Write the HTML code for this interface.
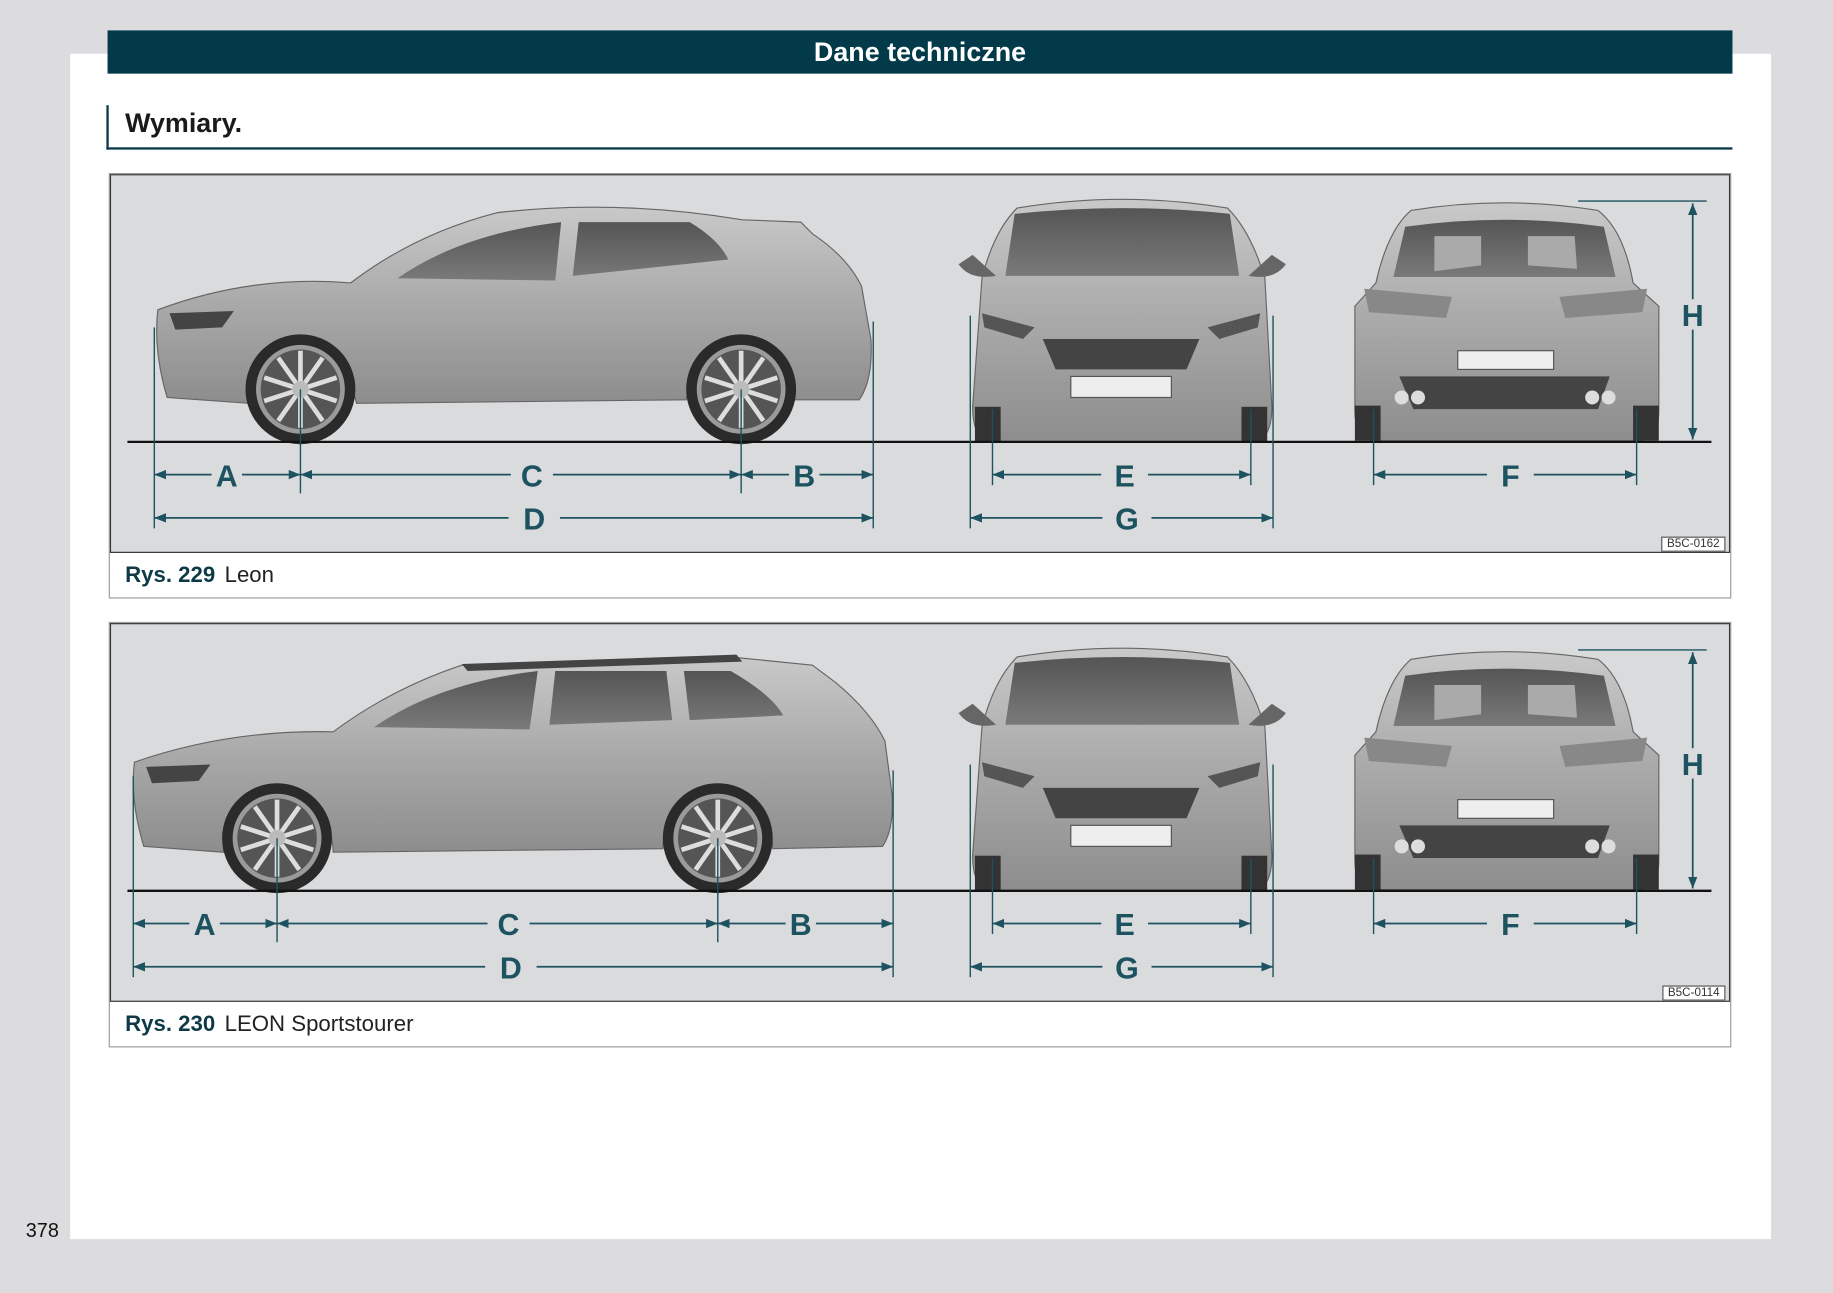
<!DOCTYPE html>
<html><head><meta charset="utf-8"><style>
html,body{margin:0;padding:0;width:1833px;height:1293px;overflow:hidden;background:#dcdcde;}
#w{position:absolute;left:0;top:0;width:1568px;height:1106px;transform:scale(1.16901);transform-origin:0 0;font-family:"Liberation Sans","DejaVu Sans",sans-serif;}
.page{position:absolute;left:60px;top:46px;width:1455px;height:1014px;background:#fff;}
.hdr{position:absolute;left:92px;top:26px;width:1390px;height:37px;background:#023a4a;color:#fff;font-weight:bold;font-size:23px;text-align:center;line-height:37px;}
.h2{position:absolute;left:91px;top:90px;width:1389px;height:36px;border-left:2px solid #0e3a48;border-bottom:2px solid #0e3a48;}
.h2 span{position:absolute;left:14px;top:2px;font-size:23px;font-weight:bold;color:#1a1a1a;}
.fig{position:absolute;left:93px;width:1386px;height:362px;border:1px solid #9a9a9a;background:#fff;}
.img{position:absolute;left:0;top:0;width:1386px;height:324px;background:#dadbdd;border:1px solid #333;box-sizing:border-box;}
.cap{position:absolute;left:13px;top:333px;font-size:19px;color:#222;}
.cap b{color:#0e3a48;font-weight:bold;margin-right:8px;}
.code{position:absolute;right:3px;bottom:0;font-size:10px;background:#fff;border:1px solid #555;padding:0 4px;color:#333;}
.pn{position:absolute;left:22px;top:1043px;font-size:17px;color:#111;}
</style></head><body><div id="w">
<div class="page"></div>
<div class="hdr">Dane techniczne</div>
<div class="h2"><span>Wymiary.</span></div>

<svg width="0" height="0" style="position:absolute">
<defs>
<linearGradient id="bg1" x1="0" y1="0" x2="0" y2="1"><stop offset="0" stop-color="#c9c9c9"/><stop offset="0.5" stop-color="#a9a9a9"/><stop offset="1" stop-color="#8d8d8d"/></linearGradient>
<linearGradient id="gl" x1="0" y1="0" x2="0" y2="1"><stop offset="0" stop-color="#555"/><stop offset="1" stop-color="#7a7a7a"/></linearGradient>
<marker id="ar" markerWidth="10" markerHeight="8" refX="10" refY="4" orient="auto-start-reverse" markerUnits="userSpaceOnUse"><path d="M0,0 L10,4 L0,8z" fill="#1d5260"/></marker>
<g id="wheel"><circle r="47" fill="#2a2a2a"/><circle r="38" fill="#9a9a9a"/><circle r="34" fill="#555"/>
<g stroke="#ddd" stroke-width="4"><line x1="0" y1="-33" x2="0" y2="33"/><line x1="-31" y1="-10" x2="31" y2="10"/><line x1="-31" y1="10" x2="31" y2="-10"/><line x1="-19" y1="-27" x2="19" y2="27"/><line x1="19" y1="-27" x2="-19" y2="27"/></g><circle r="7" fill="#bbb"/></g>
<g id="front"><path d="M10,70 Q20,30 40,10 Q130,-5 220,10 Q240,30 252,70 L258,180 Q258,205 245,210 L15,210 Q2,205 2,180 Z" fill="url(#bg1)" stroke="#666"/>
<path d="M38,15 Q130,5 222,15 L230,68 L30,68 Z" fill="url(#gl)"/>
<path d="M2,50 L-10,58 Q0,72 22,68Z M258,50 L270,58 Q260,72 238,68Z" fill="#666"/>
<path d="M62,122 L196,122 L185,148 L73,148Z" fill="#444"/><rect x="86" y="154" width="86" height="18" fill="#eee" stroke="#555"/>
<path d="M10,100 L55,112 L45,122 L12,112Z M248,100 L203,112 L213,122 L246,112Z" fill="#555"/>
<rect x="4" y="180" width="22" height="30" fill="#333"/><rect x="232" y="180" width="22" height="30" fill="#333"/></g>
<g id="rear"><path d="M20,70 Q30,25 50,8 Q130,-5 210,8 Q232,25 240,70 L262,90 L262,180 Q262,200 248,205 L16,205 Q2,200 2,180 L2,90 Z" fill="url(#bg1)" stroke="#666"/>
<path d="M45,22 Q130,10 215,22 L225,65 L35,65 Z" fill="url(#gl)"/>
<path d="M70,30 L110,30 L110,55 L70,60Z M150,30 L190,30 L192,58 L150,55Z" fill="#aaa"/>
<path d="M10,75 L85,82 L80,100 L14,95Z M252,75 L177,82 L182,100 L248,95Z" fill="#888"/>
<rect x="90" y="128" width="82" height="16" fill="#eee" stroke="#555"/>
<path d="M40,150 L220,150 L210,178 L52,178Z" fill="#444"/>
<circle cx="42" cy="168" r="6" fill="#ddd"/><circle cx="56" cy="168" r="6" fill="#ddd"/><circle cx="205" cy="168" r="6" fill="#ddd"/><circle cx="219" cy="168" r="6" fill="#ddd"/>
<rect x="2" y="175" width="22" height="30" fill="#333"/><rect x="240" y="175" width="22" height="30" fill="#333"/></g>
</defs></svg>

<div class="fig" style="top:148px">
<div class="img">
<svg width="1386" height="324" style="position:absolute;left:0;top:0" font-family="Liberation Sans,sans-serif" font-weight="bold" font-size="26" fill="#1d5260">
<path d="M40,115 Q120,85 205,92 Q260,50 330,32 Q430,20 540,38 L590,40 L600,50 Q630,70 642,95 L650,140 Q652,175 640,192 L585,192 A47,47 0 0 0 492,192 L210,195 A47,47 0 0 0 118,195 L48,190 Q36,150 40,115Z" fill="url(#bg1)" stroke="#666"/>
<path d="M245,88 Q300,50 385,40 L380,90 Z M400,40 L495,40 Q520,55 528,72 L395,86Z" fill="url(#gl)"/>
<path d="M50,118 L105,116 L95,130 L55,132Z" fill="#444"/>
<use href="#wheel" x="162" y="183"/><use href="#wheel" x="539" y="183"/>
<use href="#front" x="735" y="18"/><use href="#rear" x="1062" y="22"/>
<line x1="14" y1="228" x2="1369" y2="228" stroke="#111" stroke-width="2"/>
<g stroke="#1d5260" stroke-width="1.2">
<line x1="37" y1="130" x2="37" y2="302"/><line x1="162" y1="183" x2="162" y2="272"/><line x1="539" y1="183" x2="539" y2="272"/><line x1="652" y1="125" x2="652" y2="302"/>
<line x1="735" y1="120" x2="735" y2="302"/><line x1="754" y1="200" x2="754" y2="265"/><line x1="975" y1="200" x2="975" y2="265"/><line x1="994" y1="120" x2="994" y2="302"/>
<line x1="1080" y1="200" x2="1080" y2="265"/><line x1="1305" y1="200" x2="1305" y2="265"/><line x1="1255" y1="22" x2="1365" y2="22"/>
</g>
<g stroke="#1d5260" stroke-width="1.5" marker-start="url(#ar)" marker-end="url(#ar)">
<line x1="37" y1="256" x2="162" y2="256"/><line x1="162" y1="256" x2="539" y2="256"/><line x1="539" y1="256" x2="652" y2="256"/>
<line x1="37" y1="293" x2="652" y2="293"/><line x1="754" y1="256" x2="975" y2="256"/><line x1="735" y1="293" x2="994" y2="293"/>
<line x1="1080" y1="256" x2="1305" y2="256"/><line x1="1353" y1="24" x2="1353" y2="226"/>
</g>
<g text-anchor="middle"><rect x="86" y="243" width="26" height="26" fill="#dadbdd"/><text x="99" y="266">A</text>
<rect x="342" y="243" width="36" height="26" fill="#dadbdd"/><text x="360" y="266">C</text>
<rect x="580" y="243" width="26" height="26" fill="#dadbdd"/><text x="593" y="266">B</text>
<rect x="340" y="280" width="44" height="26" fill="#dadbdd"/><text x="362" y="303">D</text>
<rect x="847" y="243" width="40" height="26" fill="#dadbdd"/><text x="867" y="266">E</text>
<rect x="848" y="280" width="42" height="26" fill="#dadbdd"/><text x="869" y="303">G</text>
<rect x="1177" y="243" width="40" height="26" fill="#dadbdd"/><text x="1197" y="266">F</text>
<rect x="1340" y="106" width="26" height="26" fill="#dadbdd"/><text x="1353" y="129">H</text></g>
</svg>
<div class="code">B5C-0162</div>
</div>
<div class="cap"><b>Rys. 229</b>Leon</div>
</div>

<div class="fig" style="top:532px">
<div class="img">
<svg width="1386" height="324" style="position:absolute;left:0;top:0" font-family="Liberation Sans,sans-serif" font-weight="bold" font-size="26" fill="#1d5260">
<path d="M20,118 Q100,90 190,92 Q240,55 300,35 L530,28 L600,35 L620,50 Q650,75 662,100 L668,145 Q670,175 660,190 L566,192 A47,47 0 0 0 472,192 L190,195 A47,47 0 0 0 96,195 L28,190 Q16,150 20,118Z" fill="url(#bg1)" stroke="#666"/>
<path d="M300,34 L535,26 L540,32 L305,40Z" fill="#444"/>
<path d="M225,88 Q280,50 365,40 L358,90 Z M380,40 L475,40 L480,82 L375,86Z M490,40 L530,40 Q565,60 575,78 L495,82Z" fill="url(#gl)"/>
<path d="M30,122 L85,120 L75,134 L35,136Z" fill="#444"/>
<use href="#wheel" x="142" y="183"/><use href="#wheel" x="519" y="183"/>
<use href="#front" x="735" y="18"/><use href="#rear" x="1062" y="22"/>
<line x1="14" y1="228" x2="1369" y2="228" stroke="#111" stroke-width="2"/>
<g stroke="#1d5260" stroke-width="1.2">
<line x1="19" y1="130" x2="19" y2="302"/><line x1="142" y1="183" x2="142" y2="272"/><line x1="519" y1="183" x2="519" y2="272"/><line x1="669" y1="125" x2="669" y2="302"/>
<line x1="735" y1="120" x2="735" y2="302"/><line x1="754" y1="200" x2="754" y2="265"/><line x1="975" y1="200" x2="975" y2="265"/><line x1="994" y1="120" x2="994" y2="302"/>
<line x1="1080" y1="200" x2="1080" y2="265"/><line x1="1305" y1="200" x2="1305" y2="265"/><line x1="1255" y1="22" x2="1365" y2="22"/>
</g>
<g stroke="#1d5260" stroke-width="1.5" marker-start="url(#ar)" marker-end="url(#ar)">
<line x1="19" y1="256" x2="142" y2="256"/><line x1="142" y1="256" x2="519" y2="256"/><line x1="519" y1="256" x2="669" y2="256"/>
<line x1="19" y1="293" x2="669" y2="293"/><line x1="754" y1="256" x2="975" y2="256"/><line x1="735" y1="293" x2="994" y2="293"/>
<line x1="1080" y1="256" x2="1305" y2="256"/><line x1="1353" y1="24" x2="1353" y2="226"/>
</g>
<g text-anchor="middle"><rect x="67" y="243" width="26" height="26" fill="#dadbdd"/><text x="80" y="266">A</text>
<rect x="322" y="243" width="36" height="26" fill="#dadbdd"/><text x="340" y="266">C</text>
<rect x="577" y="243" width="26" height="26" fill="#dadbdd"/><text x="590" y="266">B</text>
<rect x="320" y="280" width="44" height="26" fill="#dadbdd"/><text x="342" y="303">D</text>
<rect x="847" y="243" width="40" height="26" fill="#dadbdd"/><text x="867" y="266">E</text>
<rect x="848" y="280" width="42" height="26" fill="#dadbdd"/><text x="869" y="303">G</text>
<rect x="1177" y="243" width="40" height="26" fill="#dadbdd"/><text x="1197" y="266">F</text>
<rect x="1340" y="106" width="26" height="26" fill="#dadbdd"/><text x="1353" y="129">H</text></g>
</svg>
<div class="code">B5C-0114</div>
</div>
<div class="cap"><b>Rys. 230</b>LEON Sportstourer</div>
</div>

<div class="pn">378</div>
</div></body></html>
